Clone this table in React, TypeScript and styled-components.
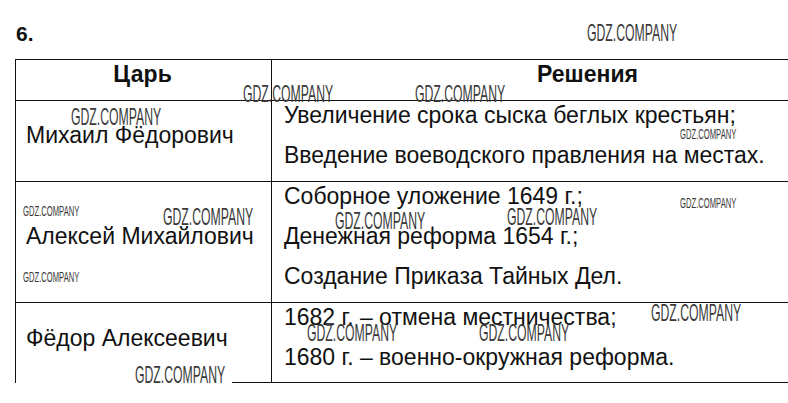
import styled, { createGlobalStyle } from "styled-components";

const GlobalStyle = createGlobalStyle`
    html, body {
        margin: 0;
        padding: 0;
        background: #fff;
        overflow: hidden;
    }
`;

const Page = styled.div`
    position: relative;
    width: 788px;
    height: 403px;
    overflow: hidden;
    font-family: "Liberation Sans", Arial, sans-serif;
    color: #111;
    padding: 22px 0 0 15px;
    box-sizing: border-box;
`;

const TaskNumber = styled.div`
    font-size: 21px;
    font-weight: bold;
    line-height: 24px;
    margin: 0 0 13px 1px;
`;

const Table = styled.div`
    display: grid;
    grid-template-columns: 256px 631px;
    width: 887px;
    border-top: 1px solid #111;
    border-left: 1px solid #111;
`;

const Cell = styled.div<{ $first?: boolean; $last?: boolean; $head?: boolean }>`
    box-sizing: border-box;
    padding: 0 12px ${(p) => (p.$last ? "11px" : "12px")} ${(p) => (p.$first ? "10px" : "12px")};
    border-right: ${(p) => (p.$first ? "1px solid #111" : "none")};
    border-bottom: ${(p) => (p.$last && p.$first ? "none" : "1px solid #111")};
    display: flex;
    flex-direction: column;
    justify-content: ${(p) => (p.$first ? "center" : "flex-start")};
    align-items: ${(p) => (p.$head ? "center" : "flex-start")};
    gap: 12px;
    font-size: 23px;
    font-weight: ${(p) => (p.$head ? "bold" : "normal")};
    line-height: 28px;
    min-height: ${(p) => (p.$head ? "40px" : "auto")};
    background: ${(p) =>
        p.$last && p.$first ? "linear-gradient(#111, #111) no-repeat right bottom / 39px 1px" : "none"};
    white-space: nowrap;
`;

const Line = styled.div``;

const Watermark = styled.span<{ $x: number; $y: number; $small?: boolean }>`
    position: absolute;
    left: ${(p) => p.$x}px;
    top: ${(p) => p.$y - (p.$small ? 2 : 3)}px;
    font-family: "Liberation Sans", Arial, sans-serif;
    font-size: ${(p) => (p.$small ? "15px" : "24px")};
    line-height: 1;
    color: #3a3a3a;
    white-space: nowrap;
    transform: scaleX(0.51);
    transform-origin: left top;
    pointer-events: none;
`;

const rows = [
    {
        tsar: "Михаил Фёдорович",
        decisions: ["Увеличение срока сыска беглых крестьян;", "Введение воеводского правления на местах."],
    },
    {
        tsar: "Алексей Михайлович",
        decisions: ["Соборное уложение 1649 г.;", "Денежная реформа 1654 г.;", "Создание Приказа Тайных Дел."],
    },
    {
        tsar: "Фёдор Алексеевич",
        decisions: ["1682 г. – отмена местничества;", "1680 г. – военно-окружная реформа."],
    },
];

const marks = [
    { x: 587, y: 24 },
    { x: 243, y: 85 },
    { x: 415, y: 85 },
    { x: 71, y: 108 },
    { x: 680, y: 128, small: true },
    { x: 680, y: 197, small: true },
    { x: 23, y: 205, small: true },
    { x: 163, y: 208 },
    { x: 335, y: 212 },
    { x: 507, y: 208 },
    { x: 23, y: 271, small: true },
    { x: 651, y: 304 },
    { x: 307, y: 324 },
    { x: 479, y: 324 },
    { x: 135, y: 366 },
];

const App = () => {
    return (
        <Page>
            <GlobalStyle />
            <TaskNumber>6.</TaskNumber>
            <Table>
                <Cell $first $head>Царь</Cell>
                <Cell $head>Решения</Cell>
                {rows.map((row, i) => {
                    const last = i === rows.length - 1;
                    return [
                        <Cell key={`t${i}`} $first $last={last}>
                            {row.tsar}
                        </Cell>,
                        <Cell key={`d${i}`} $last={last}>
                            {row.decisions.map((d) => (
                                <Line key={d}>{d}</Line>
                            ))}
                        </Cell>,
                    ];
                })}
            </Table>
            {marks.map((m, i) => (
                <Watermark key={i} $x={m.x} $y={m.y} $small={m.small}>
                    GDZ.COMPANY
                </Watermark>
            ))}
        </Page>
    );
};

export default App;
